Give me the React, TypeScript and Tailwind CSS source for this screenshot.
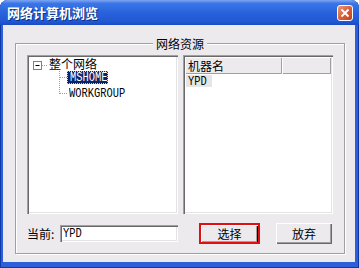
import React from "react";

const cjk = "font-['Noto_Sans_CJK_SC','Noto_Sans_CJK_JP',sans-serif]";
const mono = "inline-block font-['Liberation_Mono',monospace] text-[13px] leading-none scale-x-[0.8] origin-left";

function TreeLines() {
  return (
    <svg className="absolute left-[2px] top-[2px]" width="147" height="60" viewBox="0 0 147 60">
      <g stroke="#a0a0a0" strokeWidth="1" strokeDasharray="1 1" fill="none">
        <line x1="13" y1="8.5" x2="19" y2="8.5" />
        <line x1="30.5" y1="14" x2="30.5" y2="37" />
        <line x1="31" y1="20.5" x2="38" y2="20.5" />
        <line x1="31" y1="36.5" x2="38" y2="36.5" />
      </g>
      <rect x="4.5" y="4.5" width="8" height="8" fill="#fff" stroke="#808080" />
      <line x1="6.5" y1="8.5" x2="10.5" y2="8.5" stroke="#000" />
    </svg>
  );
}

export default function App() {
  return (
    <div className="w-[359px] h-[268px] flex flex-col rounded-t-[8px] overflow-hidden bg-[#2d5fd8] shadow-[inset_1px_0_0_#0d3aa8,inset_-1px_0_0_#0d3aa8,inset_0_-1px_0_#0d3aa8]">
      <div className="h-[25px] shrink-0 flex items-center justify-between pl-[7px] pr-[6px] bg-[linear-gradient(180deg,#7ea6f2_0%,#3a76e8_14%,#2963dc_50%,#2158d4_85%,#1a4cc4_100%)]">
        <span className={`${cjk} text-[13px] font-bold text-white leading-none [text-shadow:1px_1px_0_#0f2f80]`}>网络计算机浏览</span>
        <div className="w-[16px] h-[16px] rounded-[3px] border border-white bg-[linear-gradient(135deg,#ee9a7c_0%,#d9603c_50%,#c13e1c_100%)] flex items-center justify-center">
          <svg width="10" height="10" viewBox="0 0 10 10">
            <line x1="1.5" y1="1.5" x2="8.5" y2="8.5" stroke="#fff" strokeWidth="1.8" />
            <line x1="8.5" y1="1.5" x2="1.5" y2="8.5" stroke="#fff" strokeWidth="1.8" />
          </svg>
        </div>
      </div>
      <div className="flex-1 ml-[3px] mr-[4px] mb-[6px] bg-[#edeaee] pt-[18px] pl-[12px]">
        <div className="relative w-[330px] h-[211px] border border-[#a0a0a0] shadow-[inset_1px_1px_0_#fff,1px_1px_0_#fff] pt-[11px] pl-[11px]">
          <div className={`absolute top-[-7px] left-1/2 -translate-x-1/2 h-[14px] px-[3px] bg-[#edeaee] ${cjk} text-[12px] leading-[14px] text-black`}>网络资源</div>
          <div className="flex gap-[5px]">
            <div className="relative w-[151px] h-[159px] bg-white p-[2px] shadow-[inset_1px_1px_0_#a0a0a0,inset_2px_2px_0_#696969,inset_-1px_-1px_0_#fff,inset_-2px_-2px_0_#e3e3e3]">
              <TreeLines />
              <div className="relative flex flex-col">
                <div className={`h-[14px] flex items-center pl-[20px] ${cjk} text-[12px] leading-none text-black`}>整个网络</div>
                <div className="h-[13px] flex items-center pl-[38px]">
                  <div className="w-[41px] h-[13px] flex items-center pl-[2px] bg-[#0a246a] text-white border border-dotted border-[#d8d29a]">
                    <span className={mono}>MSHOME</span>
                  </div>
                </div>
                <div className="h-[13px] mt-[3px] flex items-center pl-[40px] text-black">
                  <span className={mono}>WORKGROUP</span>
                </div>
              </div>
            </div>
            <div className="w-[150px] h-[159px] bg-white p-[2px] shadow-[inset_1px_1px_0_#a0a0a0,inset_2px_2px_0_#696969,inset_-1px_-1px_0_#fff,inset_-2px_-2px_0_#e3e3e3] flex flex-col">
              <div className="h-[17px] flex shrink-0">
                <div className={`w-[97px] h-full flex items-center pl-[3px] bg-[#edeaee] shadow-[inset_1px_1px_0_#fff,inset_-1px_-1px_0_#a0a0a0] ${cjk} text-[12px] leading-none text-black`}>机器名</div>
                <div className="flex-1 h-full bg-[#edeaee] shadow-[inset_1px_1px_0_#fff,inset_-1px_-1px_0_#a0a0a0]" />
              </div>
              <div className="pl-[1px] pt-[1px]">
                <div className="w-[26px] h-[12px] flex items-center pl-[2px] bg-[#e6e6e6] text-black">
                  <span className={mono}>YPD</span>
                </div>
              </div>
            </div>
          </div>
          <div className="mt-[9px] flex items-center h-[21px]">
            <div className={`w-[33px] ${cjk} text-[12px] leading-none text-black`}>当前:</div>
            <div className="w-[118px] h-[17px] bg-white flex items-center pl-[3px] shadow-[inset_1px_1px_0_#a0a0a0,inset_2px_2px_0_#696969,inset_-1px_-1px_0_#fff,inset_-2px_-2px_0_#e3e3e3] text-black">
              <span className={mono}>YPD</span>
            </div>
            <div className="ml-[21px] w-[61px] h-[21px] border-2 border-[#e01010] bg-[#edeaee] flex items-center justify-center shadow-[inset_1px_1px_0_#fff,inset_-1px_0_0_#000,inset_-2px_-1px_0_#a0a0a0]">
              <span className={`${cjk} text-[12px] leading-none text-black`}>选择</span>
            </div>
            <div className="ml-[16px] w-[56px] h-[21px] bg-[#edeaee] flex items-center justify-center shadow-[inset_1px_1px_0_#fff,inset_-1px_-1px_0_#696969,inset_-2px_-2px_0_#a0a0a0]">
              <span className={`${cjk} text-[12px] leading-none text-black`}>放弃</span>
            </div>
          </div>
        </div>
      </div>
    </div>
  );
}
